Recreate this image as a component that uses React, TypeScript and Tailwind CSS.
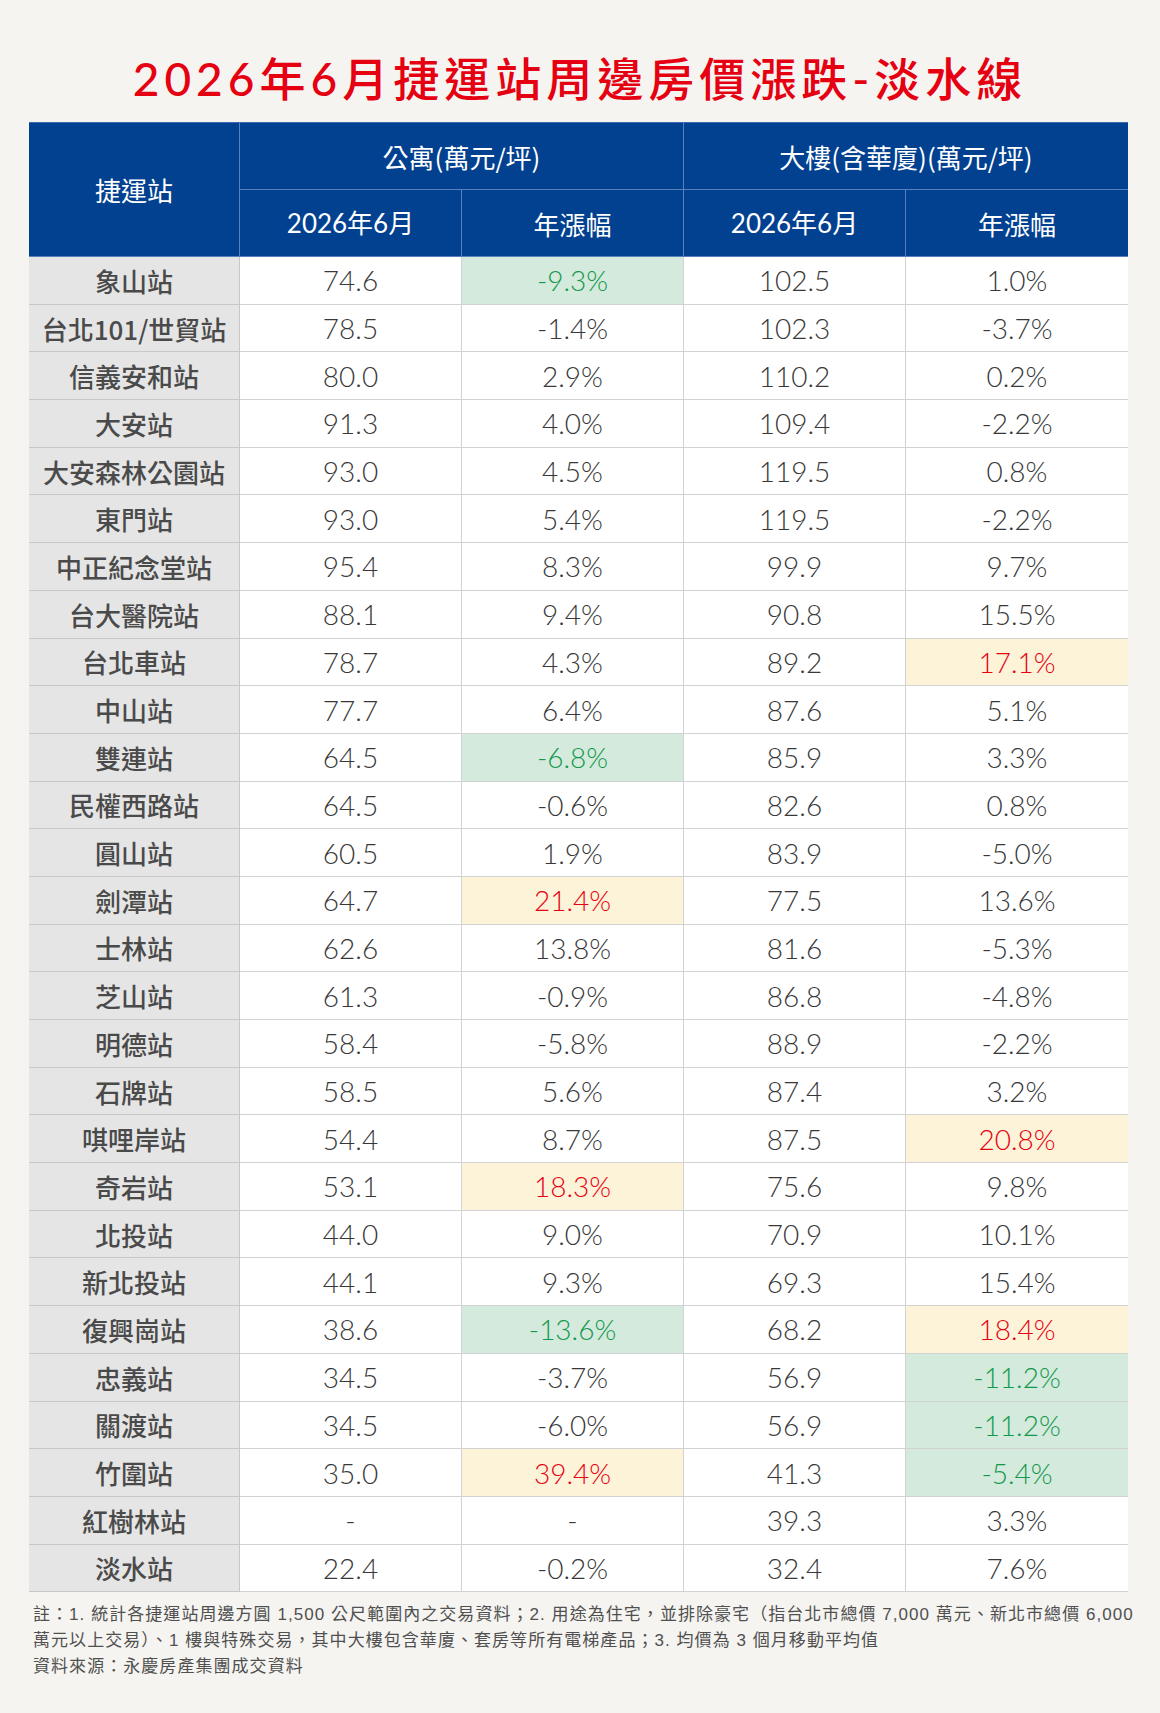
import React from 'react';

type Mark = 'g' | 'y' | undefined;

interface Row {
  name: string;
  aptPrice: string;
  aptYoy: string;
  aptMark?: Mark;
  bldPrice: string;
  bldYoy: string;
  bldMark?: Mark;
}

const rows: Row[] = [
  { name: '象山站', aptPrice: '74.6', aptYoy: '-9.3%', aptMark: 'g', bldPrice: '102.5', bldYoy: '1.0%' },
  { name: '台北101/世貿站', aptPrice: '78.5', aptYoy: '-1.4%', bldPrice: '102.3', bldYoy: '-3.7%' },
  { name: '信義安和站', aptPrice: '80.0', aptYoy: '2.9%', bldPrice: '110.2', bldYoy: '0.2%' },
  { name: '大安站', aptPrice: '91.3', aptYoy: '4.0%', bldPrice: '109.4', bldYoy: '-2.2%' },
  { name: '大安森林公園站', aptPrice: '93.0', aptYoy: '4.5%', bldPrice: '119.5', bldYoy: '0.8%' },
  { name: '東門站', aptPrice: '93.0', aptYoy: '5.4%', bldPrice: '119.5', bldYoy: '-2.2%' },
  { name: '中正紀念堂站', aptPrice: '95.4', aptYoy: '8.3%', bldPrice: '99.9', bldYoy: '9.7%' },
  { name: '台大醫院站', aptPrice: '88.1', aptYoy: '9.4%', bldPrice: '90.8', bldYoy: '15.5%' },
  { name: '台北車站', aptPrice: '78.7', aptYoy: '4.3%', bldPrice: '89.2', bldYoy: '17.1%', bldMark: 'y' },
  { name: '中山站', aptPrice: '77.7', aptYoy: '6.4%', bldPrice: '87.6', bldYoy: '5.1%' },
  { name: '雙連站', aptPrice: '64.5', aptYoy: '-6.8%', aptMark: 'g', bldPrice: '85.9', bldYoy: '3.3%' },
  { name: '民權西路站', aptPrice: '64.5', aptYoy: '-0.6%', bldPrice: '82.6', bldYoy: '0.8%' },
  { name: '圓山站', aptPrice: '60.5', aptYoy: '1.9%', bldPrice: '83.9', bldYoy: '-5.0%' },
  { name: '劍潭站', aptPrice: '64.7', aptYoy: '21.4%', aptMark: 'y', bldPrice: '77.5', bldYoy: '13.6%' },
  { name: '士林站', aptPrice: '62.6', aptYoy: '13.8%', bldPrice: '81.6', bldYoy: '-5.3%' },
  { name: '芝山站', aptPrice: '61.3', aptYoy: '-0.9%', bldPrice: '86.8', bldYoy: '-4.8%' },
  { name: '明德站', aptPrice: '58.4', aptYoy: '-5.8%', bldPrice: '88.9', bldYoy: '-2.2%' },
  { name: '石牌站', aptPrice: '58.5', aptYoy: '5.6%', bldPrice: '87.4', bldYoy: '3.2%' },
  { name: '唭哩岸站', aptPrice: '54.4', aptYoy: '8.7%', bldPrice: '87.5', bldYoy: '20.8%', bldMark: 'y' },
  { name: '奇岩站', aptPrice: '53.1', aptYoy: '18.3%', aptMark: 'y', bldPrice: '75.6', bldYoy: '9.8%' },
  { name: '北投站', aptPrice: '44.0', aptYoy: '9.0%', bldPrice: '70.9', bldYoy: '10.1%' },
  { name: '新北投站', aptPrice: '44.1', aptYoy: '9.3%', bldPrice: '69.3', bldYoy: '15.4%' },
  { name: '復興崗站', aptPrice: '38.6', aptYoy: '-13.6%', aptMark: 'g', bldPrice: '68.2', bldYoy: '18.4%', bldMark: 'y' },
  { name: '忠義站', aptPrice: '34.5', aptYoy: '-3.7%', bldPrice: '56.9', bldYoy: '-11.2%', bldMark: 'g' },
  { name: '關渡站', aptPrice: '34.5', aptYoy: '-6.0%', bldPrice: '56.9', bldYoy: '-11.2%', bldMark: 'g' },
  { name: '竹圍站', aptPrice: '35.0', aptYoy: '39.4%', aptMark: 'y', bldPrice: '41.3', bldYoy: '-5.4%', bldMark: 'g' },
  { name: '紅樹林站', aptPrice: '-', aptYoy: '-', bldPrice: '39.3', bldYoy: '3.3%' },
  { name: '淡水站', aptPrice: '22.4', aptYoy: '-0.2%', bldPrice: '32.4', bldYoy: '7.6%' },
];

const cjk = "font-['Noto_Sans_CJK_TC',sans-serif]";
const num = "font-['Lato','Noto_Sans_CJK_TC',sans-serif]";

function ValueCell({ value, mark, last }: { value: string; mark?: Mark; last?: boolean }) {
  const tone =
    mark === 'g'
      ? 'bg-[#d3eadc] text-[#14994c]'
      : mark === 'y'
        ? 'bg-[#fdf3d8] text-[#e60012]'
        : 'bg-white text-[#383838]';
  return (
    <div
      className={`flex items-center justify-center border-b border-[#d2d2d2] ${last ? '' : 'border-r'} ${tone} ${num} text-[28px] font-light`}
    >
      {value}
    </div>
  );
}

export default function App() {
  return (
    <div className={`min-h-[1713px] w-[1160px] bg-[#f5f4f0] ${cjk}`}>
      <h1
        className={`h-[122px] pt-[51px] text-center text-[46px] leading-[56px] font-medium tracking-[5px] text-[#e50012] ${num}`}
      >
        2026年6月捷運站周邊房價漲跌-淡水線
      </h1>

      <div className="ml-[29px] w-[1099px]">
        {/* header */}
        <div className="grid grid-cols-[211px_222px_222px_222px_222px] grid-rows-[67px_67px] border-t border-[#3d68ad] bg-[#014190] text-white">
          <div className="row-span-2 flex items-center justify-center border-r border-b border-[#5a7fbd] text-[26px]">
            捷運站
          </div>
          <div className="col-span-2 flex items-center justify-center border-r border-b border-[#5a7fbd] text-[26px]">
            公寓(萬元/坪)
          </div>
          <div className="col-span-2 flex items-center justify-center border-b border-[#5a7fbd] text-[26px]">
            大樓(含華廈)(萬元/坪)
          </div>
          <div className={`flex items-center justify-center border-r border-b border-[#5a7fbd] text-[26px] ${num}`}>
            2026年6月
          </div>
          <div className="flex items-center justify-center border-r border-b border-[#5a7fbd] text-[26px]">
            年漲幅
          </div>
          <div className={`flex items-center justify-center border-r border-b border-[#5a7fbd] text-[26px] ${num}`}>
            2026年6月
          </div>
          <div className="flex items-center justify-center border-b border-[#5a7fbd] text-[26px]">
            年漲幅
          </div>
        </div>

        {/* body */}
        {rows.map((r) => (
          <div
            key={r.name}
            className="grid h-[47.7px] grid-cols-[211px_222px_222px_222px_222px]"
          >
            <div className="flex items-center justify-center border-r border-b border-[#c8c8c8] bg-[#e5e5e5] text-[26px] font-medium text-[#4a4a4a]">
              {r.name}
            </div>
            <ValueCell value={r.aptPrice} />
            <ValueCell value={r.aptYoy} mark={r.aptMark} />
            <ValueCell value={r.bldPrice} />
            <ValueCell value={r.bldYoy} mark={r.bldMark} last />
          </div>
        ))}
      </div>

      <div className="ml-[33px] mt-[10px] font-['Liberation_Sans','Noto_Sans_CJK_TC',sans-serif] text-[17px] leading-[26px] tracking-[1.05px] whitespace-nowrap text-[#505050]">
        <p>
          註：1. 統計各捷運站周邊方圓 1,500 公尺範圍內之交易資料；2. 用途為住宅，並排除豪宅（指台北市總價 7,000 萬元、新北市總價 6,000
        </p>
        <p>萬元以上交易）、1 樓與特殊交易，其中大樓包含華廈、套房等所有電梯產品；3. 均價為 3 個月移動平均值</p>
        <p>資料來源：永慶房產集團成交資料</p>
      </div>
    </div>
  );
}
